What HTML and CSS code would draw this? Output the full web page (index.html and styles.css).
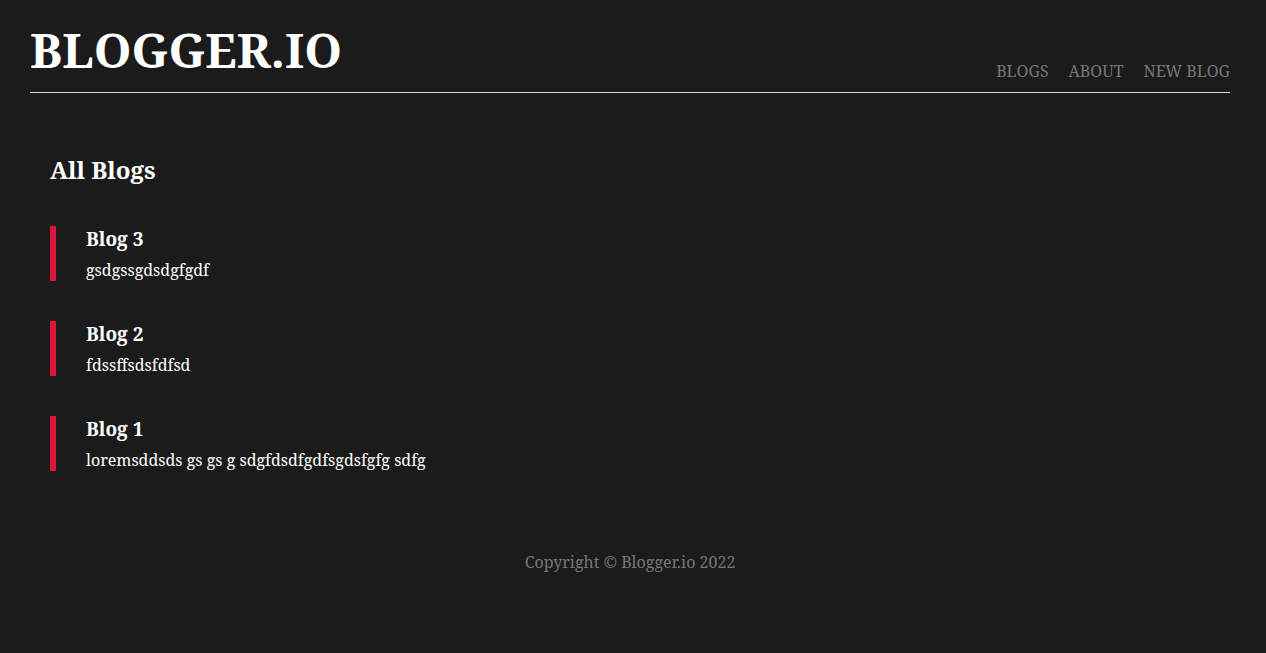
FILE: index.html
```html
<!DOCTYPE html>
<html lang="en">
<head>
<meta charset="utf-8">
<title>Blogger.io</title>
<link rel="stylesheet" href="styles.css">
</head>
<body>
<header class="site-header">
  <h1 class="site-title">BLOGGER.IO</h1>
  <nav class="site-nav">
    <a href="#blogs">BLOGS</a>
    <a href="#about">ABOUT</a>
    <a href="#new">NEW BLOG</a>
  </nav>
</header>
<main class="content">
  <h2 class="page-title">All Blogs</h2>
  <article class="blog"><h3 class="blog-title">Blog 3</h3><p class="blog-text">gsdgssgdsdgfgdf</p></article>
  <article class="blog"><h3 class="blog-title">Blog 2</h3><p class="blog-text">fdssffsdsfdfsd</p></article>
  <article class="blog"><h3 class="blog-title">Blog 1</h3><p class="blog-text">loremsddsds gs gs g sdgfdsdfgdfsgdsfgfg sdfg</p></article>
</main>
<footer class="site-footer">Copyright © Blogger.io 2022</footer>
</body>
</html>
```
FILE: styles.css
```css
* { box-sizing: border-box; margin: 0; padding: 0; }
body {
  background: #1b1b1b;
  color: #fff;
  font-family: "Noto Serif", "Droid Serif", "DejaVu Serif Condensed", "Liberation Serif", serif;
  font-size: 16px;
  line-height: 22px;
  padding: 20px 36px 20px 30px;
}
.site-header {
  display: flex;
  justify-content: space-between;
  align-items: flex-end;
  border-bottom: 1px solid #ddd;
  padding-bottom: 10px;
}
.site-title { font-size: 48px; line-height: 60px; margin-bottom: 2px; }
.site-nav { display: flex; gap: 20px; }
.site-nav a { color: #777; text-decoration: none; }
.content { padding: 60px 20px 0; }
.page-title { font-size: 24px; line-height: 33px; margin-bottom: 40px; }
.blog { border-left: 6px solid crimson; padding-left: 30px; margin-bottom: 40px; }
.blog-title { font-size: 19px; line-height: 26px; margin-bottom: 7px; }
.blog-text { line-height: 22px; }
.site-footer { color: #777; text-align: center; padding: 40px 0 60px; }
```
